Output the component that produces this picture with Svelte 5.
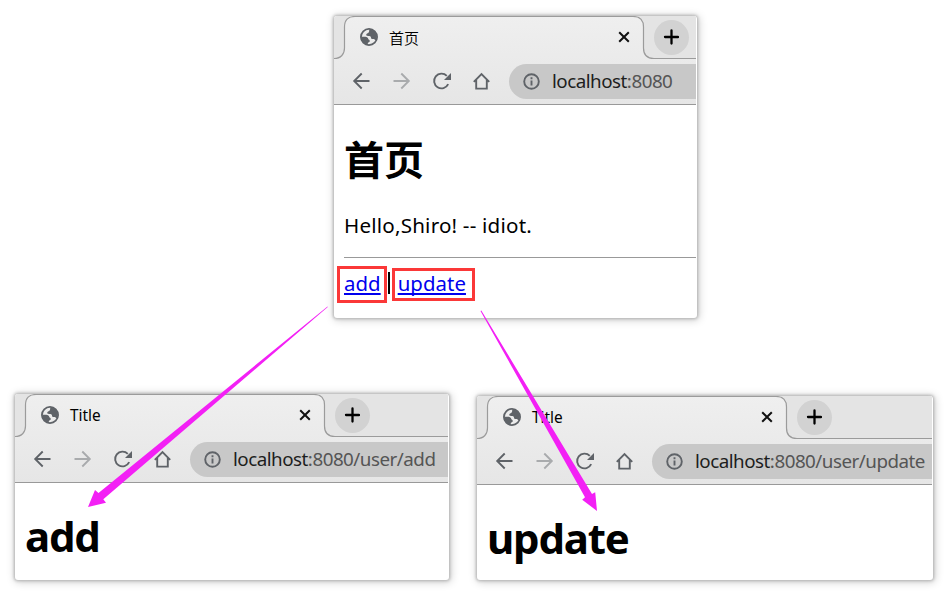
<script>
  const windows = [
    { id: 'home', x: 334, y: 16, w: 363, h: 302, title: '首页', path: '', heading: '首页', home: true },
    { id: 'add', x: 15, y: 394, w: 434, h: 186, title: 'Title', path: '/user/add', heading: 'add' },
    { id: 'update', x: 477, y: 396, w: 456, h: 184, title: 'Title', path: '/user/update', heading: 'update' }
  ];
</script>

<main class="canvas">
  {#each windows as win (win.id)}
    <section class="window" style="left:{win.x}px;top:{win.y}px;width:{win.w}px;height:{win.h}px">
      <header class="chrome">
        <svg class="outline" width={win.w - 1} height="44" fill="none">
          <path d="M0 0H21C14 .5 10.5 4 10.5 11V32C10.5 38 7 42.5 0 42.5ZM299 0H{win.w}V42.5H320C313 42.5 309.5 39 309.5 32V11C309.5 4 306 .5 299 .5Z" fill="#e4e4e4" />
          <path d="M0 42.5C7 42.5 10.5 38 10.5 32V11C10.5 4 14 .5 21 .5H299C306 .5 309.5 4 309.5 11V32C309.5 39 313 42.5 320 42.5H{win.w}" stroke="#9b9b9b" stroke-width="1.2" />
        </svg>
        <div class="tabs">
          <div class="tab">
            <svg class="globe" width="18" height="18" viewBox="0 0 18 18">
              <circle cx="9" cy="9" r="8.1" fill="#ececec" stroke="#5f6368" stroke-width="1.8" />
              <path d="M9.800 1C8.600 2.400 9.600 3.600 8.700 4.600 7.900 5.500 6.300 5.500 6.200 6.800 6.200 8 7.600 8 9.300 8 10.800 8 11 9 11.100 10.200 11.300 11.300 12.600 10.700 13.800 11.100 14.800 11.400 14.800 12.400 15.800 12.500A8 8 0 0 0 9.800 1Z" fill="#5f6368" />
              <path d="M1.200 8.700H5.200C7 8.700 8.200 9.600 8.300 11.100 8.400 12 9.800 11.800 9.800 13 9.800 14.400 8.200 14 7.800 15.200L7.600 17A8 8 0 0 1 1.200 8.700Z" fill="#5f6368" />
            </svg>
            <span class="title" class:cjk={win.home}>{win.title}</span>
            <svg class="close" width="12" height="12" viewBox="0 0 12 12" stroke="#111" stroke-width="2"><path d="M1.200 1.200 10.800 10.800M10.800 1.200 1.200 10.800" /></svg>
          </div>
          <div class="plus">
            <svg width="16" height="16" viewBox="0 0 16 16" stroke="#000" stroke-width="2.300" stroke-linecap="round"><path d="M8.500 1.500V14.500M2 8H15" /></svg>
          </div>
        </div>
        <div class="toolbar">
          <svg class="nav" width="138" height="20" viewBox="0 0 138 20" fill="none" stroke="#5f6368" stroke-width="1.900">
            <path d="M17.500 10H2.500M9.700 2.500 2.200 10 9.700 17.500" />
            <path d="M41.500 10H56.500M49.300 2.500 56.800 10 49.300 17.500" stroke="#a9abad" />
            <path d="M96.200 13.200A7.400 7.400 0 1 1 94.800 4.800" />
            <path d="M99 2V9H92Z" fill="#5f6368" stroke="none" />
            <path d="M121.800 10.800 129.500 3 137.200 10.800M124.200 9V17.600H134.800V9" />
          </svg>
          <div class="address">
            <svg width="17" height="17" viewBox="0 0 17 17" fill="none" stroke="#5f6368" stroke-width="1.900"><circle cx="8.500" cy="8.500" r="7.300" /><path d="M8.500 7.500V12.500M8.500 4.300V6.200" /></svg>
            <span class="url"><b>localhost</b>:8080{win.path}</span>
          </div>
        </div>
      </header>
      <article class="page">
        <h1 class:cjk={win.home}>{win.heading}</h1>
        {#if win.home}
          <p>Hello,Shiro! -- idiot.</p>
          <hr />
          <nav><a href="#add">add</a><i></i><a href="#update">update</a></nav>
        {/if}
      </article>
    </section>
  {/each}
  <span class="mark mark-add"></span>
  <span class="mark mark-update"></span>
  <svg class="arrows" width="950" height="591" viewBox="0 0 950 591" fill="#f320f5">
    <path d="M327.500 306.500 98.500 493 95 490 88 507 106 502.700 103.300 499.200 327.800 307Z" />
    <path d="M480.500 311 585 497.300 582.200 499.700 597 511 595.200 492.200 592 494 481.300 310.500Z" />
  </svg>
</main>

<style>
  :global(body) { margin: 0; background: #fff; }
  .canvas { position: relative; width: 950px; height: 591px; overflow: hidden; font-family: "Noto Sans", "Noto Sans CJK SC", sans-serif; color: #000; }
  .window { position: absolute; box-sizing: border-box; background: #fff; border-radius: 3px; box-shadow: 0 0 3px 1px #b4b4b4, 1px 1px 8px 1px #ccc; overflow: hidden; }
  .chrome { position: relative; box-sizing: border-box; height: 89px; margin-right: 1px; border-bottom: 1px solid #999; background: linear-gradient(#efefef, #e6e6e6); }
  .outline { position: absolute; inset: 0; }
  .tabs { position: relative; display: flex; box-sizing: border-box; height: 43px; align-items: center; padding: 0 0 1px 26px; }
  .tab { display: flex; align-items: center; width: 270px; flex: none; }
  .globe { flex: none; }
  .title { margin: 2px 0 0 11px; font-size: 15.400px; line-height: 20px; }
  .title.cjk { font-family: "Noto Sans CJK SC", sans-serif; font-size: 15px; font-weight: 350; }
  .close { margin-left: auto; }
  .plus { display: grid; place-items: center; width: 35px; height: 35px; margin-left: 23.500px; border-radius: 50%; background: #d2d2d2; }
  .toolbar { position: relative; display: flex; height: 45px; align-items: center; padding-left: 18px; }
  .nav { flex: none; margin-bottom: 2px; }
  .address { display: flex; align-items: center; box-sizing: border-box; height: 35px; flex: 1; min-width: 0; margin-left: 19px; padding-left: 14px; border-radius: 18px 0 0 18px; background: #c8c8c8; }
  .address svg { flex: none; }
  .url { margin: 0 0 2px 12px; font-size: 18.800px; line-height: 26px; color: #555; white-space: nowrap; letter-spacing: -.5px; }
  .url b { font-weight: 400; color: #1d1d1d; }
  .page { padding: 22px 1px 0 10px; }
  h1 { margin: 0; font-size: 42px; line-height: 62px; font-weight: 700; letter-spacing: -1.200px; }
  h1.cjk { font-family: "Noto Sans CJK SC", sans-serif; font-size: 40px; letter-spacing: 0; }
  p { margin: 20px 0 0; font-size: 20.600px; line-height: 32px; white-space: nowrap; letter-spacing: .2px; }
  hr { margin: 16px 0 0; border: 0; height: 1px; background: #999; }
  nav { display: flex; align-items: center; height: 50px; font-size: 20.400px; line-height: 30px; letter-spacing: .05px; }
  a { color: #00e; text-decoration: underline; text-decoration-thickness: 2px; text-underline-offset: 2px; text-decoration-skip-ink: none; }
  i { width: 2px; height: 22px; margin: 0 7.500px; background: #000; }
  .mark { position: absolute; box-sizing: border-box; border: 3px solid #fb3838; }
  .mark-add { left: 337px; top: 266px; width: 50px; height: 37px; }
  .mark-update { left: 392px; top: 268px; width: 83px; height: 33px; }
  .arrows { position: absolute; inset: 0; }
</style>
